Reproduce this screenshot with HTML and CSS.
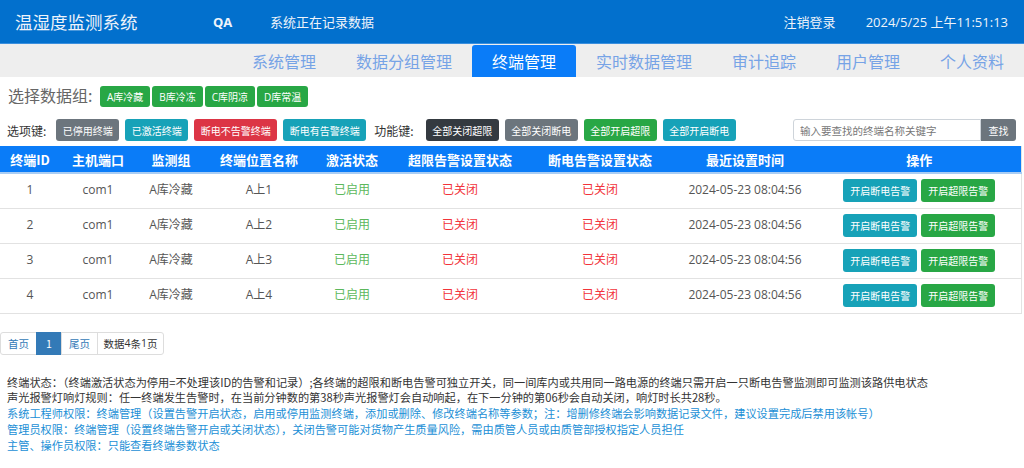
FILE: index.html
```html
<!DOCTYPE html>
<html lang="zh-CN">
<head>
<meta charset="utf-8">
<title>温湿度监测系统</title>
<link rel="stylesheet" href="styles.css">
</head>
<body>
<header class="topbar">
  <div class="brand">温湿度监测系统</div>
  <div class="user">QA</div>
  <div class="status">系统正在记录数据</div>
  <div class="spacer"></div>
  <div class="logout">注销登录</div>
  <div class="clock">2024/5/25 上午11:51:13</div>
</header>
<nav class="tabs">
  <span class="tab">系统管理</span>
  <span class="tab">数据分组管理</span>
  <span class="tab active">终端管理</span>
  <span class="tab">实时数据管理</span>
  <span class="tab">审计追踪</span>
  <span class="tab">用户管理</span>
  <span class="tab">个人资料</span>
</nav>
<div class="groups">
  <span class="glabel">选择数据组:</span>
  <div class="gbtns">
    <span class="btn b-success">A库冷藏</span>
    <span class="btn b-success">B库冷冻</span>
    <span class="btn b-success">C库阴凉</span>
    <span class="btn b-success">D库常温</span>
  </div>
</div>
<div class="tools">
  <span class="tlabel">选项键:</span>
  <span class="btn b-secondary">已停用终端</span>
  <span class="btn b-info">已激活终端</span>
  <span class="btn b-danger">断电不告警终端</span>
  <span class="btn b-info">断电有告警终端</span>
  <span class="tlabel func">功能键:</span>
  <span class="btn b-dark">全部关闭超限</span>
  <span class="btn b-secondary">全部关闭断电</span>
  <span class="btn b-success">全部开启超限</span>
  <span class="btn b-info">全部开启断电</span>
  <div class="spacer"></div>
  <div class="search">
    <input class="sinput" type="text" placeholder="输入要查找的终端名称关键字">
    <span class="btn b-secondary sbtn">查找</span>
  </div>
</div>
<table class="grid">
  <colgroup>
    <col class="c1"><col class="c2"><col class="c3"><col class="c4"><col class="c5"><col class="c6"><col class="c7"><col class="c8"><col class="c9">
  </colgroup>
  <thead>
    <tr><th>终端ID</th><th>主机端口</th><th>监测组</th><th>终端位置名称</th><th>激活状态</th><th>超限告警设置状态</th><th>断电告警设置状态</th><th>最近设置时间</th><th>操作</th></tr>
  </thead>
  <tbody>
    <tr><td>1</td><td>com1</td><td>A库冷藏</td><td>A上1</td><td class="on">已启用</td><td class="off">已关闭</td><td class="off">已关闭</td><td>2024-05-23 08:04:56</td><td><span class="btn b-info rb">开启断电告警</span><span class="btn b-success rb">开启超限告警</span></td></tr>
    <tr><td>2</td><td>com1</td><td>A库冷藏</td><td>A上2</td><td class="on">已启用</td><td class="off">已关闭</td><td class="off">已关闭</td><td>2024-05-23 08:04:56</td><td><span class="btn b-info rb">开启断电告警</span><span class="btn b-success rb">开启超限告警</span></td></tr>
    <tr><td>3</td><td>com1</td><td>A库冷藏</td><td>A上3</td><td class="on">已启用</td><td class="off">已关闭</td><td class="off">已关闭</td><td>2024-05-23 08:04:56</td><td><span class="btn b-info rb">开启断电告警</span><span class="btn b-success rb">开启超限告警</span></td></tr>
    <tr><td>4</td><td>com1</td><td>A库冷藏</td><td>A上4</td><td class="on">已启用</td><td class="off">已关闭</td><td class="off">已关闭</td><td>2024-05-23 08:04:56</td><td><span class="btn b-info rb">开启断电告警</span><span class="btn b-success rb">开启超限告警</span></td></tr>
  </tbody>
</table>
<div class="pager">
  <span class="pg pg-link">首页</span><span class="pg pg-cur">1</span><span class="pg pg-link">尾页</span><span class="pg pg-total">数据<b>4</b>条<b>1</b>页</span>
</div>
<div class="notes">
  <p class="n-dark">终端状态：（终端激活状态为停用=不处理该ID的告警和记录）;各终端的超限和断电告警可独立开关，同一间库内或共用同一路电源的终端只需开启一只断电告警监测即可监测该路供电状态</p>
  <p class="n-dark">声光报警灯响灯规则：任一终端发生告警时，在当前分钟数的第38秒声光报警灯会自动响起，在下一分钟的第06秒会自动关闭，响灯时长共28秒。</p>
  <p class="n-blue">系统工程师权限：终端管理（设置告警开启状态，启用或停用监测终端，添加或删除、修改终端名称等参数；注：增删修终端会影响数据记录文件，建议设置完成后禁用该帐号）</p>
  <p class="n-blue">管理员权限：终端管理（设置终端告警开启或关闭状态），关闭告警可能对货物产生质量风险，需由质管人员或由质管部授权指定人员担任</p>
  <p class="n-blue">主管、操作员权限：只能查看终端参数状态</p>
</div>
</body>
</html>
```

FILE: styles.css
```css
* { box-sizing: border-box; }
html, body { margin: 0; padding: 0; }
body {
  width: 1024px;
  height: 468px;
  overflow: hidden;
  background: #fff;
  font-family: "Open Sans", "Noto Sans CJK SC", sans-serif;
  color: #333;
}

.topbar {
  height: 44px;
  background: #0270cd;
  border-bottom: 1px solid #3a8fde;
  display: flex;
  align-items: center;
  color: #eef3fa;
  padding: 0 16px 0 15px;
}
.brand { font-size: 17.5px; width: 198px; }
.user { font-size: 13px; font-weight: 700; width: 57px; }
.status { font-size: 13px; }
.spacer { flex: 1; }
.logout { font-size: 13px; margin-right: 30px; }
.clock { font-size: 13px; }

.tabs {
  height: 33px;
  background: #eeeeee;
  display: flex;
  justify-content: flex-end;
  align-items: flex-end;
}
.tab {
  padding: 0 20px;
  height: 32px;
  line-height: 32px;
  font-size: 16px;
  color: #76a3e6;
  font-family: "Noto Sans CJK SC", sans-serif;
}
.tab.active {
  background: #0a7cf8;
  color: #fff;
  border-radius: 3px 3px 0 0;
}

.groups {
  display: flex;
  align-items: center;
  padding: 9px 0 0 8px;
  height: 30px;
}
.glabel {
  font-size: 16px;
  color: #666;
  width: 92px;
  font-family: "Noto Sans CJK SC", sans-serif;
  margin-top: -4px;
}
.gbtns { display: flex; gap: 2px; }
.gbtns .btn { height: 21px; padding: 0 7px; }

.btn {
  display: inline-flex;
  align-items: center;
  justify-content: center;
  height: 22px;
  padding: 0 6.5px;
  font-size: 10px;
  color: #fff;
  border-radius: 3px;
  white-space: nowrap;
  font-family: "Open Sans", "Noto Sans CJK SC", sans-serif;
}
.b-success { background: #28a745; }
.b-secondary { background: #6c757d; }
.b-info { background: #17a2b8; }
.b-danger { background: #dc3545; }
.b-dark { background: #343a40; }

.tools {
  display: flex;
  align-items: center;
  gap: 6px;
  padding: 12px 8px 0 7px;
  height: 34px;
}
.tlabel {
  font-size: 12px;
  color: #333;
  font-family: "Noto Sans CJK SC", sans-serif;
  margin-right: 4px;
}
.tlabel.func { margin-left: 2px; margin-right: 6px; }
.search { display: flex; align-items: center; }
.sinput {
  width: 188px;
  height: 22px;
  border: 1px solid #ced4da;
  border-radius: 3px 0 0 3px;
  padding: 0 6px;
  font-size: 10.5px;
  font-family: "Noto Sans CJK SC", sans-serif;
  color: #495057;
  outline: none;
}
.sinput::placeholder { color: #777; }
.sbtn { width: 35px; height: 22px; border-radius: 0 3px 3px 0; padding: 0; }

.grid {
  width: 1021px;
  border-collapse: collapse;
  table-layout: fixed;
  margin-top: 5px;
  border-right: 1px solid #e3e3e3;
}
.c1 { width: 60px; } .c2 { width: 76px; } .c3 { width: 70px; } .c4 { width: 106px; }
.c5 { width: 80px; } .c6 { width: 136px; } .c7 { width: 144px; } .c8 { width: 146px; } .c9 { width: 203px; }
.grid th {
  background: #0a7cf8;
  color: #fff;
  font-size: 13px;
  font-weight: 700;
  height: 27px;
  padding: 0;
  border-bottom: 2px solid #a9cdf4;
  font-family: "Noto Sans CJK SC", sans-serif;
  white-space: nowrap;
}
.grid td {
  height: 35px;
  padding: 0 0 3px 0;
  text-align: center;
  font-size: 12px;
  color: #555;
  border-bottom: 1px solid #e2e2e2;
  white-space: nowrap;
}
.grid td.on { color: #5cb85c; }
.grid td.off { color: #f2333a; }
.grid td .rb { height: 23px; padding: 0 7px; margin: 3px 2px 0; font-size: 10px; }

.pager {
  display: flex;
  margin-top: 18px;
  height: 23px;
}
.pg {
  display: inline-flex;
  align-items: center;
  justify-content: center;
  height: 23px;
  font-size: 10.5px;
  border: 1px solid #ddd;
  margin-left: -1px;
  font-family: "Noto Sans CJK SC", sans-serif;
}
.pg:first-child { margin-left: 0; border-radius: 3px 0 0 3px; }
.pg-link { color: #337ab7; width: 37px; }
.pg-cur { background: #337ab7; border-color: #337ab7; color: #fff; width: 26px; }
.pg-total { color: #333; width: 67px; border-radius: 0 3px 3px 0; }
.pg-total b { font-weight: 400; font-family: "Open Sans", sans-serif; }

.notes { margin-top: 20px; padding-left: 7px; }
.notes p {
  margin: 0;
  font-size: 11.2px;
  line-height: 15.8px;
  white-space: nowrap;
  font-family: "Noto Sans CJK SC", sans-serif;
}
.n-dark { color: #333; }
.n-blue { color: #1b8fd6; }
```
